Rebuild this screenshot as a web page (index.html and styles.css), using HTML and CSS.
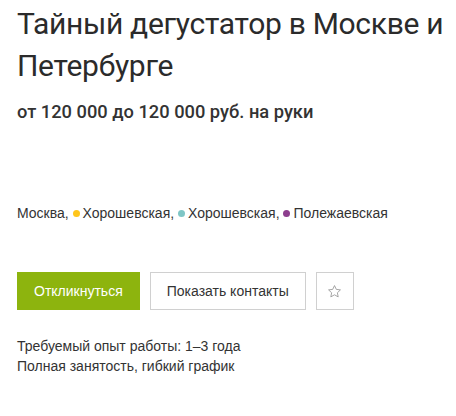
FILE: index.html
```html
<!DOCTYPE html>
<html lang="ru">
<head>
    <meta charset="UTF-8">
    <title>Тайный дегустатор в Москве и Петербурге</title>
    <link rel="stylesheet" href="styles.css">
</head>
<body>
    <div class="vacancy">
        <h1 class="vacancy-title">Тайный дегустатор в Москве и Петербурге</h1>
        <p class="vacancy-salary">от 120 000 до 120 000 руб. на руки</p>

        <p class="vacancy-address">
            Москва,
            <span class="metro"><span class="metro-dot yellow"></span>Хорошевская,</span>
            <span class="metro"><span class="metro-dot cyan"></span>Хорошевская,</span>
            <span class="metro"><span class="metro-dot purple"></span>Полежаевская</span>
        </p>

        <div class="actions">
            <button class="btn btn-primary">Откликнуться</button>
            <button class="btn">Показать контакты</button>
            <button class="btn btn-icon" title="В избранное">
                <svg width="15" height="15" viewBox="0 0 24 24">
                    <path d="M12 2.5l2.9 6.1 6.6.8-4.9 4.6 1.3 6.6L12 17.3l-5.9 3.3 1.3-6.6-4.9-4.6 6.6-.8z" fill="none" stroke="#999" stroke-width="1.4" stroke-linejoin="round"/>
                </svg>
            </button>
        </div>

        <div class="vacancy-info">
            <p>Требуемый опыт работы: 1–3 года</p>
            <p>Полная занятость, гибкий график</p>
        </div>
    </div>
</body>
</html>
```

FILE: styles.css
```css
body {
    margin: 0;
    background-color: #fff;
    color: #333;
    font-family: "Liberation Sans", Arial, sans-serif;
}
.vacancy {
    padding: 3px 0 0 17px;
}
.vacancy-title {
    margin: 0;
    font-family: Roboto, "Noto Sans", sans-serif;
    font-weight: 400;
    font-size: 30px;
    letter-spacing: -0.3px;
    line-height: 42px;
    color: #2b2b2b;
}
.vacancy-salary {
    margin: 13px 0 0;
    font-family: Roboto, "Noto Sans", sans-serif;
    font-weight: 500;
    font-size: 18.3px;
    line-height: 24px;
    color: #333;
}
.vacancy-address {
    margin: 79px 0 0;
    font-size: 14px;
    line-height: 20px;
    color: #333;
}
.metro-dot {
    display: inline-block;
    width: 7px;
    height: 7px;
    border-radius: 50%;
    margin-right: 3px;
    vertical-align: 1px;
}
.metro-dot.yellow {
    background-color: #ffc61b;
}
.metro-dot.cyan {
    background-color: #7fc6c6;
}
.metro-dot.purple {
    background-color: #8d3e8e;
}
.actions {
    display: flex;
    gap: 10px;
    margin-top: 49px;
}
.btn {
    height: 38px;
    padding: 0 16px;
    border: 1px solid #d0d0d0;
    background-color: #fff;
    color: #333;
    font-family: "Liberation Sans", Arial, sans-serif;
    font-size: 14px;
    cursor: pointer;
}
.btn-primary {
    background-color: #8db40e;
    border-color: #8db40e;
    color: #fff;
}
.btn-icon {
    width: 38px;
    padding: 0;
    display: flex;
    align-items: center;
    justify-content: center;
}
.vacancy-info {
    margin-top: 26px;
    font-size: 14px;
    line-height: 20px;
    color: #333;
}
.vacancy-info p {
    margin: 0;
}
```
